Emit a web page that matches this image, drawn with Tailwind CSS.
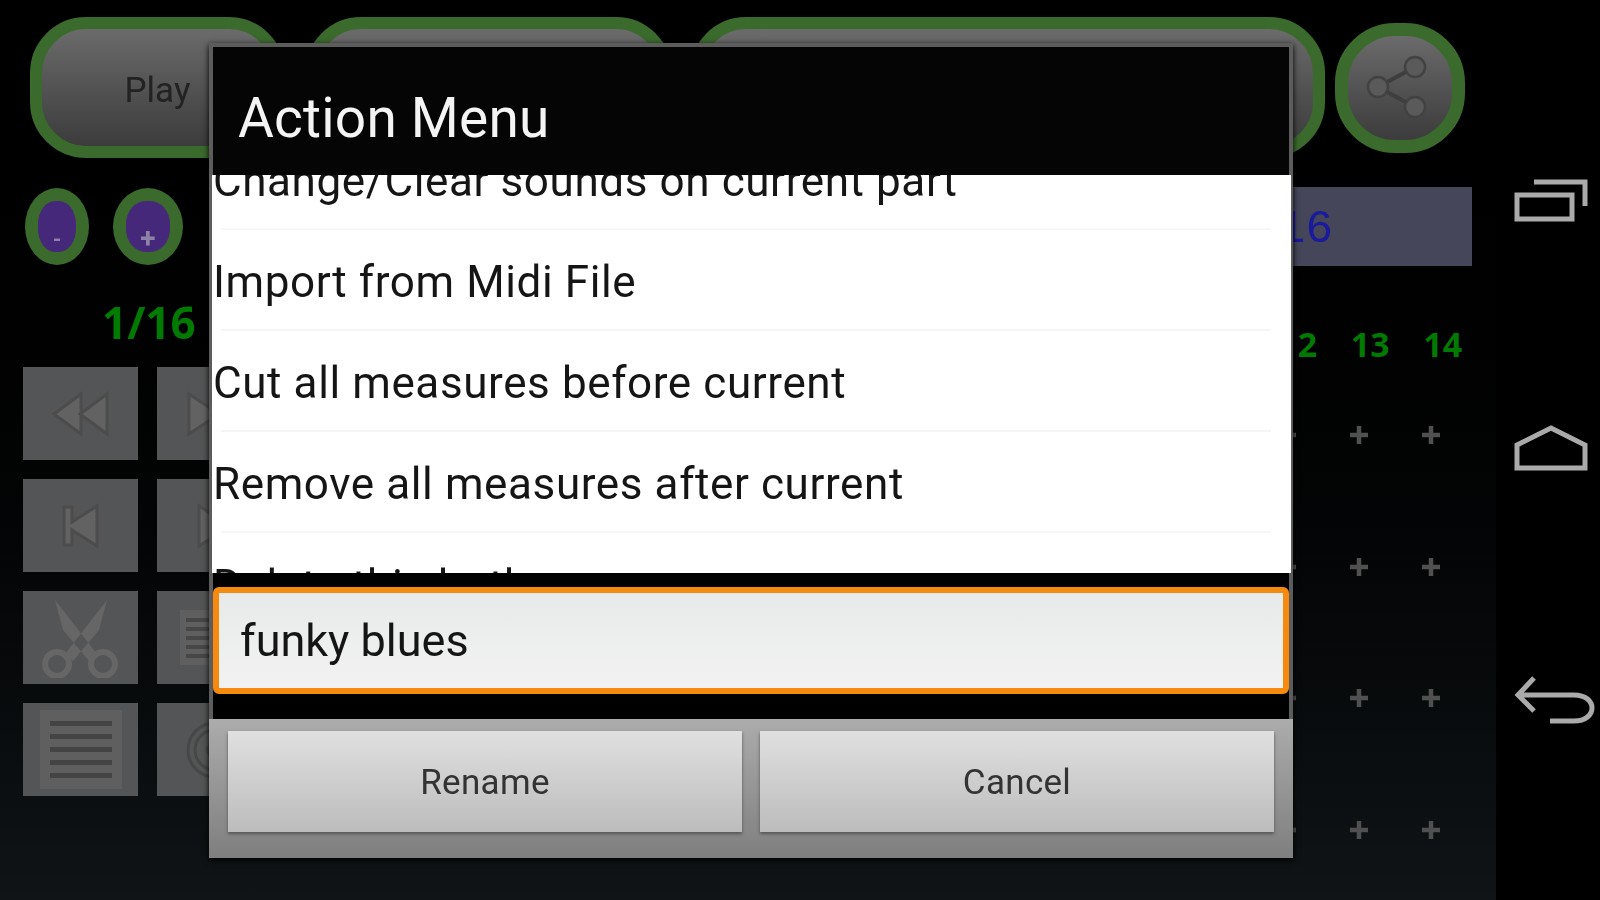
<!DOCTYPE html>
<html lang="en">
 <head>
  <meta charset="UTF-8">
  <title>Action Menu</title>
  <script src="https://cdn.jsdelivr.net/npm/@tailwindcss/browser@4"></script>
 </head>
 <body class="bg-black font-['Roboto',sans-serif]">
  <div class="relative w-[1600px] h-[900px] overflow-hidden flex blur-[0.6px]">

   <!-- app behind the dialog -->
   <main class="w-[1496px] h-full flex flex-col bg-gradient-to-b from-black to-[#101416]">
    <div class="flex items-center pl-[30px] pt-[17px] h-[158px]">
     <button class="w-[255px] h-[141px] rounded-[56px] border-[12px] border-[#3b6a2d] bg-gradient-to-b from-[#6b6b6b] to-[#3c3c3c] text-[35px] text-[#222] pt-[8px]">Play</button>
     <button class="ml-[20px] w-[367px] h-[141px] rounded-[56px] border-[12px] border-[#3b6a2d] bg-gradient-to-b from-[#6b6b6b] to-[#3c3c3c] text-[35px] text-[#222]">normal</button>
     <button class="ml-[18px] w-[635px] h-[141px] rounded-[56px] border-[12px] border-[#3b6a2d] bg-gradient-to-b from-[#6b6b6b] to-[#3c3c3c] text-[42px] font-bold text-[#101060]">funky blues</button>
     <button class="ml-[10px] w-[130px] h-[130px] rounded-[60px] border-[13px] border-[#3b6a2d] bg-gradient-to-b from-[#6b6b6b] to-[#3c3c3c] flex items-center justify-center">
      <svg width="70" height="70" viewBox="0 0 70 70"><path d="M50 14 L13 34 L50 54" fill="none" stroke="#3e3e3e" stroke-width="4"/><circle cx="50" cy="14" r="10" fill="#5a5a5a" stroke="#424242" stroke-width="2.5"/><circle cx="13" cy="34" r="10" fill="#5a5a5a" stroke="#424242" stroke-width="2.5"/><circle cx="50" cy="54" r="10" fill="#5a5a5a" stroke="#424242" stroke-width="2.5"/></svg>
     </button>
    </div>

    <div class="flex flex-1">
     <div class="w-[276px] pl-[23px] pt-[30px]">
      <div class="flex ml-[2px] gap-[24px] h-[77px]">
       <div class="w-[64px] h-[77px] rounded-[50%] bg-[#3b6a2d] p-[13px] flex">
        <div class="flex-1 rounded-[45%] bg-[#46287a] flex items-end justify-center text-[#8d82a6] text-[22px] leading-[24px] font-bold">-</div>
       </div>
       <div class="w-[70px] h-[77px] rounded-[50%] bg-[#3b6a2d] p-[13px] flex">
        <div class="flex-1 rounded-[45%] bg-[#46287a] flex items-end justify-center text-[#8d82a6] text-[28px] leading-[26px] font-bold">+</div>
       </div>
      </div>
      <div class="mt-[33px] h-[49px] pl-[79px] text-[44px] leading-[49px] font-bold text-[#007a00] font-['Open_Sans',sans-serif]">1/16</div>
      <div class="mt-[20px] grid grid-cols-[115px_115px] gap-x-[19px] gap-y-[19px]">
       <div class="h-[93px] bg-[#545556] flex items-center justify-center">
        <svg width="60" height="46" viewBox="0 0 60 46"><path d="M30 3 L3 23 L30 43 Z M56 3 L29 23 L56 43 Z" fill="#626262" stroke="#4c4c4c" stroke-width="3"/></svg>
       </div>
       <div class="h-[93px] bg-[#545556] flex items-center justify-center"><svg width="60" height="46" viewBox="0 0 60 46"><path d="M4 3 L34 23 L4 43 Z" fill="#626262" stroke="#4c4c4c" stroke-width="3"/></svg></div>
       <div class="h-[93px] bg-[#545556] flex items-center justify-center">
        <svg width="38" height="46" viewBox="0 0 38 46"><path d="M2 4 H10 V19 L35 3 V43 L10 27 V42 H2 Z" fill="#626262" stroke="#4c4c4c" stroke-width="3"/></svg>
       </div>
       <div class="h-[93px] bg-[#545556] flex items-center justify-center">
        <svg width="38" height="46" viewBox="0 0 38 46"><path d="M36 4 H28 V19 L3 3 V43 L28 27 V42 H36 Z" fill="#626262" stroke="#4c4c4c" stroke-width="3"/></svg>
       </div>
       <div class="h-[93px] bg-[#545556] flex items-center justify-center">
        <svg width="84" height="80" viewBox="0 0 84 80"><path d="M16 2 L58 56 L50 63 L24 32 Z M68 2 L26 56 L34 63 L60 32 Z" fill="#666"/><circle cx="18" cy="66" r="12" fill="none" stroke="#666" stroke-width="6"/><circle cx="64" cy="66" r="12" fill="none" stroke="#666" stroke-width="6"/></svg>
       </div>
       <div class="h-[93px] bg-[#545556] flex items-center justify-center">
        <div class="w-[70px] h-[55px] bg-[#5f5f5f] flex flex-col justify-center gap-[5px] px-[6px]">
         <div class="h-[4px] bg-[#474747]"></div><div class="h-[4px] bg-[#474747]"></div><div class="h-[4px] bg-[#474747]"></div><div class="h-[4px] bg-[#474747]"></div><div class="h-[4px] bg-[#474747]"></div>
        </div>
       </div>
       <div class="h-[93px] bg-[#545556] flex items-center justify-center">
        <div class="w-[82px] h-[79px] bg-[#5f5f5f] flex flex-col justify-center gap-[8px] px-[10px]">
         <div class="h-[5px] bg-[#444]"></div><div class="h-[5px] bg-[#444]"></div><div class="h-[5px] bg-[#444]"></div><div class="h-[5px] bg-[#444]"></div><div class="h-[5px] bg-[#444]"></div>
        </div>
       </div>
       <div class="h-[93px] bg-[#545556] flex items-center justify-center">
        <svg width="60" height="60" viewBox="0 0 60 60"><circle cx="30" cy="30" r="27" fill="none" stroke="#474747" stroke-width="3"/><circle cx="30" cy="30" r="20" fill="none" stroke="#474747" stroke-width="3"/><circle cx="30" cy="30" r="9" fill="#474747"/></svg>
       </div>
      </div>
     </div>

     <div class="flex-1 pt-[29px]">
      <div class="mr-[24px] h-[79px] bg-[#45465a] flex items-center justify-end pr-[139px] pt-[8px] text-[46px] text-[#1a1a9c] font-['Liberation_Mono',monospace]">1/16</div>
      <div class="mt-[58px] pr-[17px] flex justify-end text-[34px] leading-[40px] font-bold text-[#007a00] font-['Open_Sans',sans-serif]">
       <span class="w-[72.5px] text-center">12</span><span class="w-[72.5px] text-center">13</span><span class="w-[72.5px] text-center">14</span>
      </div>
      <div class="mt-[61px] flex flex-col gap-[111.5px] pr-[55px]">
       <div class="flex justify-end gap-[52px]">
        <svg width="20" height="20" viewBox="0 0 20 20"><path d="M10 1V19M1 10H19" stroke="#505050" stroke-width="4.5"/></svg>
        <svg width="20" height="20" viewBox="0 0 20 20"><path d="M10 1V19M1 10H19" stroke="#505050" stroke-width="4.5"/></svg>
        <svg width="20" height="20" viewBox="0 0 20 20"><path d="M10 1V19M1 10H19" stroke="#505050" stroke-width="4.5"/></svg>
       </div>
       <div class="flex justify-end gap-[52px]">
        <svg width="20" height="20" viewBox="0 0 20 20"><path d="M10 1V19M1 10H19" stroke="#505050" stroke-width="4.5"/></svg>
        <svg width="20" height="20" viewBox="0 0 20 20"><path d="M10 1V19M1 10H19" stroke="#505050" stroke-width="4.5"/></svg>
        <svg width="20" height="20" viewBox="0 0 20 20"><path d="M10 1V19M1 10H19" stroke="#505050" stroke-width="4.5"/></svg>
       </div>
       <div class="flex justify-end gap-[52px]">
        <svg width="20" height="20" viewBox="0 0 20 20"><path d="M10 1V19M1 10H19" stroke="#505050" stroke-width="4.5"/></svg>
        <svg width="20" height="20" viewBox="0 0 20 20"><path d="M10 1V19M1 10H19" stroke="#505050" stroke-width="4.5"/></svg>
        <svg width="20" height="20" viewBox="0 0 20 20"><path d="M10 1V19M1 10H19" stroke="#505050" stroke-width="4.5"/></svg>
       </div>
       <div class="flex justify-end gap-[52px]">
        <svg width="20" height="20" viewBox="0 0 20 20"><path d="M10 1V19M1 10H19" stroke="#505050" stroke-width="4.5"/></svg>
        <svg width="20" height="20" viewBox="0 0 20 20"><path d="M10 1V19M1 10H19" stroke="#505050" stroke-width="4.5"/></svg>
        <svg width="20" height="20" viewBox="0 0 20 20"><path d="M10 1V19M1 10H19" stroke="#505050" stroke-width="4.5"/></svg>
       </div>
      </div>
     </div>
    </div>
   </main>

   <!-- system nav bar -->
   <nav class="w-[104px] h-full bg-black relative">
    <svg class="absolute left-[18px] top-[178px]" width="76" height="44" viewBox="0 0 76 44"><path d="M3 17 H58 V41 H3 Z M20 4 H71 V28" fill="none" stroke="#aaa" stroke-width="5"/></svg>
    <svg class="absolute left-[18px] top-[425px]" width="76" height="46" viewBox="0 0 76 46"><path d="M3 20 L37 3 L71 20 V43 H3 Z" fill="none" stroke="#aaa" stroke-width="5"/></svg>
    <svg class="absolute left-[18px] top-[675px]" width="82" height="50" viewBox="0 0 82 50"><path d="M20 3 L4 20 L20 36 M4 20 H60 C84 20 84 46 60 46 H36" fill="none" stroke="#aaa" stroke-width="5"/></svg>
   </nav>

   <!-- dialog -->
   <div class="absolute left-[209px] top-[43px] w-[1084px] h-[815px] flex flex-col bg-[#5c5c5c] pt-[4px] shadow-[0_2px_6px_#000]">
    <div class="h-[128px] mx-[4px] bg-black/95 pl-[25px] pt-[39px] text-[55px] tracking-[0.2px] leading-[64px] text-[#f4f4f4]">Action Menu</div>
    <div class="h-[398px] ml-[3px] mr-[2px] bg-white overflow-hidden text-[44px] tracking-[0.6px] leading-[50px] text-[#151515] pl-[1px]">
     <div class="h-[55px] flex items-end border-b-2 border-[#f7f7f7] pb-[22px] ml-[8px] -indent-[8px] mr-[20px] whitespace-nowrap">Change/Clear sounds on current part</div>
     <div class="h-[101px] flex items-center pt-[4px] border-b-2 border-[#f5f5f5] ml-[8px] -indent-[8px] mr-[20px]">Import from Midi File</div>
     <div class="h-[101px] flex items-center pt-[4px] border-b-2 border-[#f5f5f5] ml-[8px] -indent-[8px] mr-[20px]">Cut all measures before current</div>
     <div class="h-[101px] flex items-center pt-[4px] border-b-2 border-[#f7f7f7] ml-[8px] -indent-[8px] mr-[20px]">Remove all measures after current</div>
     <div class="h-[101px] flex items-center pt-[4px] ml-[8px] -indent-[8px]">Delete this both</div>
    </div>
    <div class="h-[146px] mx-[4px] bg-black pt-[14px]">
     <div class="h-[107px] rounded-[6px] border-[6px] border-[#f58a0e] bg-gradient-to-b from-[#e8eaea] to-[#f2f2f2] pl-[21px] flex items-center text-[45px] text-[#151515]">funky blues</div>
    </div>
    <div class="flex-1 bg-gradient-to-b from-[#acacac] to-[#7f7f7f] flex gap-[18px] pl-[19px] pr-[19px] pt-[12px]">
     <button class="flex-1 h-[101px] pt-[3px] bg-gradient-to-b from-[#e0e0e0] to-[#bcbcbc] shadow-[0_2px_3px_#555] text-[35px] tracking-[0.3px] text-[#333]">Rename</button>
     <button class="flex-1 h-[101px] pt-[3px] bg-gradient-to-b from-[#e0e0e0] to-[#bcbcbc] shadow-[0_2px_3px_#555] text-[35px] tracking-[0.3px] text-[#333]">Cancel</button>
    </div>
   </div>
  </div>
 </body>
</html>
